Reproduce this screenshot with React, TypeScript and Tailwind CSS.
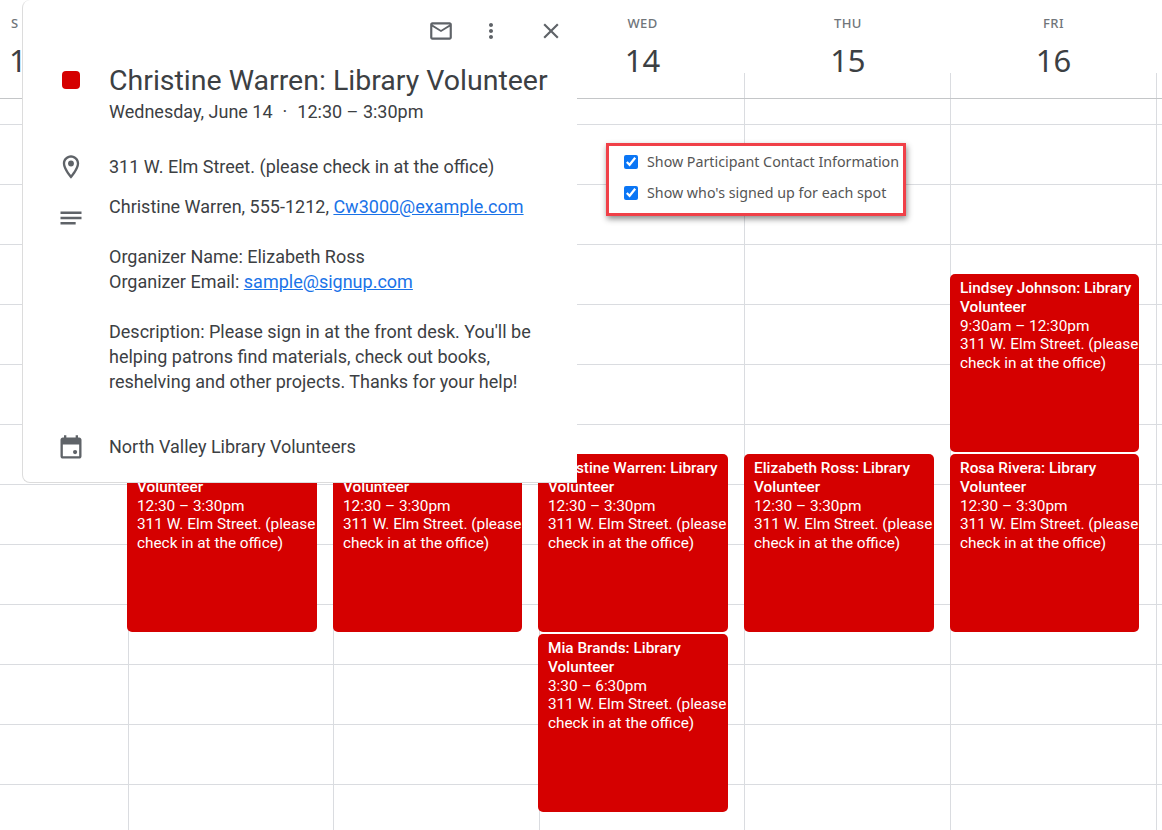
import type { ReactNode } from "react";

const hourRows = Array.from({ length: 12 });
const gridCols = "grid grid-cols-[128px_205.4px_205.4px_205.4px_205.4px_206px_1fr]";

// the two first columns are hidden under the popup, so no labels there
const days = [
  { name: "", date: "" },
  { name: "", date: "" },
  { name: "WED", date: "14" },
  { name: "THU", date: "15" },
  { name: "FRI", date: "16" },
];

const events = [
  { cls: "left-[127px] top-[454px] w-[190px]", who: "\u00a0", time: "12:30 – 3:30pm" },
  { cls: "left-[333px] top-[454px] w-[189px]", who: "\u00a0", time: "12:30 – 3:30pm" },
  { cls: "left-[538px] top-[454px] w-[190px]", who: "Christine Warren: Library", time: "12:30 – 3:30pm" },
  { cls: "left-[744px] top-[454px] w-[190px]", who: "Elizabeth Ross: Library", time: "12:30 – 3:30pm" },
  { cls: "left-[950px] top-[454px] w-[189px]", who: "Rosa Rivera: Library", time: "12:30 – 3:30pm" },
  { cls: "left-[538px] top-[634px] w-[190px]", who: "Mia Brands: Library", time: "3:30 – 6:30pm" },
  { cls: "left-[950px] top-[274px] w-[189px]", who: "Lindsey Johnson: Library", time: "9:30am – 12:30pm" },
];

const Icon = ({ children, className }: { children: ReactNode; className: string }) => (
  <svg viewBox="0 0 24 24" className={`fill-[#5f6368] ${className}`}>
    {children}
  </svg>
);

const EventCard = ({ cls, who, time }: { cls: string; who: string; time: string }) => (
  <div className={`absolute ${cls} h-[178px] bg-[#d50000] rounded-[5px] pl-[10px] pt-[5px] text-white text-[15.35px] leading-[18.75px] overflow-hidden`}>
    <div className="font-medium whitespace-nowrap">{who}</div>
    <div className="font-medium">Volunteer</div>
    <div>{time}</div>
    <div className="whitespace-nowrap">311 W. Elm Street. (please</div>
    <div className="whitespace-nowrap">check in at the office)</div>
  </div>
);

const Popup = () => (
  <div className="absolute left-[22px] top-0 w-[555px] h-[483px] bg-white rounded-l-[8px] border-l border-b border-[#dcdcdc] text-[#3c4043] text-[18px] leading-[25px]">
    <div className="flex justify-end items-center h-[62px] pr-[13px]">
      <Icon className="w-[26px] h-[26px] mr-[25px]">
        <path d="M20 4H4c-1.1 0-1.99.9-1.99 2L2 18c0 1.1.9 2 2 2h16c1.1 0 2-.9 2-2V6c0-1.1-.9-2-2-2zm0 14H4V8l8 5 8-5v10zm-8-7L4 6h16l-8 5z" />
      </Icon>
      <Icon className="w-[24px] h-[24px] mr-[35px]">
        <path d="M12 8c1.1 0 2-.9 2-2s-.9-2-2-2-2 .9-2 2 .9 2 2 2zm0 2c-1.1 0-2 .9-2 2s.9 2 2 2 2-.9 2-2-.9-2-2-2zm0 6c-1.1 0-2 .9-2 2s.9 2 2 2 2-.9 2-2-.9-2-2-2z" />
      </Icon>
      <Icon className="w-[26px] h-[26px]">
        <path d="M19 6.41L17.59 5 12 10.59 6.41 5 5 6.41 10.59 12 5 17.59 6.41 19 12 13.41 17.59 19 19 17.59 13.41 12z" />
      </Icon>
    </div>

    <div className="flex">
      <div className="w-[86px] shrink-0 pl-[39px] pt-[9px]">
        <div className="w-[18px] h-[18px] rounded-[4px] bg-[#d50000]" />
      </div>
      <div>
        <div className="text-[28.5px] leading-[37px] whitespace-nowrap">Christine Warren: Library Volunteer</div>
        <div className="leading-[26px] flex">
          <span>Wednesday, June 14</span>
          <span className="mx-[10px]">·</span>
          <span>12:30 – 3:30pm</span>
        </div>
      </div>
    </div>

    <div className="flex mt-[28px]">
      <div className="w-[86px] shrink-0 pl-[34px]">
        <Icon className="w-[28px] h-[28px]">
          <path d="M12 2C8.13 2 5 5.13 5 9c0 5.25 7 13 7 13s7-7.75 7-13c0-3.87-3.13-7-7-7zM7 9c0-2.76 2.24-5 5-5s5 2.24 5 5c0 2.88-2.88 7.19-5 9.88C9.92 16.21 7 11.85 7 9z" />
          <circle cx="12" cy="9" r="2.5" />
        </Icon>
      </div>
      <div className="pt-[1px]">311 W. Elm Street. (please check in at the office)</div>
    </div>

    <div className="flex mt-[13px]">
      <div className="w-[86px] shrink-0 pl-[34px] pt-[2px]">
        <Icon className="w-[28px] h-[28px] mt-[8px]">
          <path d="M3 6.5h18v2H3zM3 11h18v2H3zM3 15.5h13v2H3z" />
        </Icon>
      </div>
      <div className="w-[440px]">
        <div>
          Christine Warren, 555-1212,{" "}
          <span className="text-[#1a73e8] underline">Cw3000@example.com</span>
        </div>
        <div className="mt-[25px]">Organizer Name: Elizabeth Ross</div>
        <div>
          Organizer Email: <span className="text-[#1a73e8] underline">sample@signup.com</span>
        </div>
        <div className="mt-[25px] whitespace-nowrap">Description: Please sign in at the front desk. You'll be</div>
        <div className="whitespace-nowrap">helping patrons find materials, check out books,</div>
        <div className="whitespace-nowrap">reshelving and other projects. Thanks for your help!</div>
      </div>
    </div>

    <div className="flex mt-[40px]">
      <div className="w-[86px] shrink-0 pl-[34px]">
        <Icon className="w-[28px] h-[28px]">
          <path d="M16 1v2H8V1H6v2H5c-1.11 0-2 .9-2 2v14c0 1.1.89 2 2 2h14c1.1 0 2-.9 2-2V5c0-1.1-.9-2-2-2h-1V1h-2zm3 18H5V9h14v10z" />
          <circle cx="15.5" cy="15.5" r="1.8" />
        </Icon>
      </div>
      <div>North Valley Library Volunteers</div>
    </div>
  </div>
);

const Options = () => (
  <div className="absolute left-[606px] top-[143px] w-[300px] h-[73px] bg-white border-[3px] border-[#f04048] shadow-[1px_3px_6px_rgba(0,0,0,0.45)] pl-[15px] flex flex-col gap-[12px] pt-[6px] text-[#555] text-[14.25px] leading-[19px] font-['Noto_Sans',sans-serif]">
    {["Show Participant Contact Information", "Show who's signed up for each spot"].map((label) => (
      <label key={label} className="flex items-center gap-[9px] whitespace-nowrap">
        <input type="checkbox" defaultChecked className="w-[14px] h-[14px] accent-[#0b76f5]" />
        {label}
      </label>
    ))}
  </div>
);

export default function App() {
  return (
    <div className="relative w-[1162px] h-[830px] overflow-hidden bg-white font-['Roboto',sans-serif]">
      {/* header row, the vertical dividers only start low down */}
      <div className={`${gridCols} h-[99px] border-b border-[#c4c6c8] font-['Noto_Sans',sans-serif]`}>
        <div className="pl-[11px]">
          <div className="pt-[15px] text-[#70757a] text-[13px] leading-[16px] font-medium">S</div>
          <div className="pt-[12px] -ml-[2px] text-[#3c4043] text-[31px] leading-[34px]">1</div>
        </div>
        {days.map((d, i) => (
          <div key={i} className="relative text-center pl-[2px]">
            <div className="absolute left-0 top-[73px] bottom-0 w-px bg-[#dadce0]" />
            <div className="pt-[15px] h-[31px] text-[#70757a] text-[13px] leading-[16px] font-medium tracking-[0.4px]">{d.name}</div>
            <div className="pt-[12px] text-[#3c4043] text-[31px] leading-[34px]">{d.date}</div>
          </div>
        ))}
        <div className="relative">
          <div className="absolute left-0 top-[73px] bottom-0 w-px bg-[#dadce0]" />
        </div>
      </div>

      <div className={gridCols}>
        {Array.from({ length: 7 }).map((_, col) => (
          <div key={col} className={col > 0 ? "border-l border-[#dadce0]" : ""}>
            <div className="h-[26px] border-b border-[#dadce0]" />
            {hourRows.map((_, row) => (
              <div key={row} className="h-[60px] border-b border-[#dadce0]" />
            ))}
          </div>
        ))}
      </div>

      {events.map((e, i) => (
        <EventCard key={i} {...e} />
      ))}
      <Options />
      <Popup />
    </div>
  );
}
